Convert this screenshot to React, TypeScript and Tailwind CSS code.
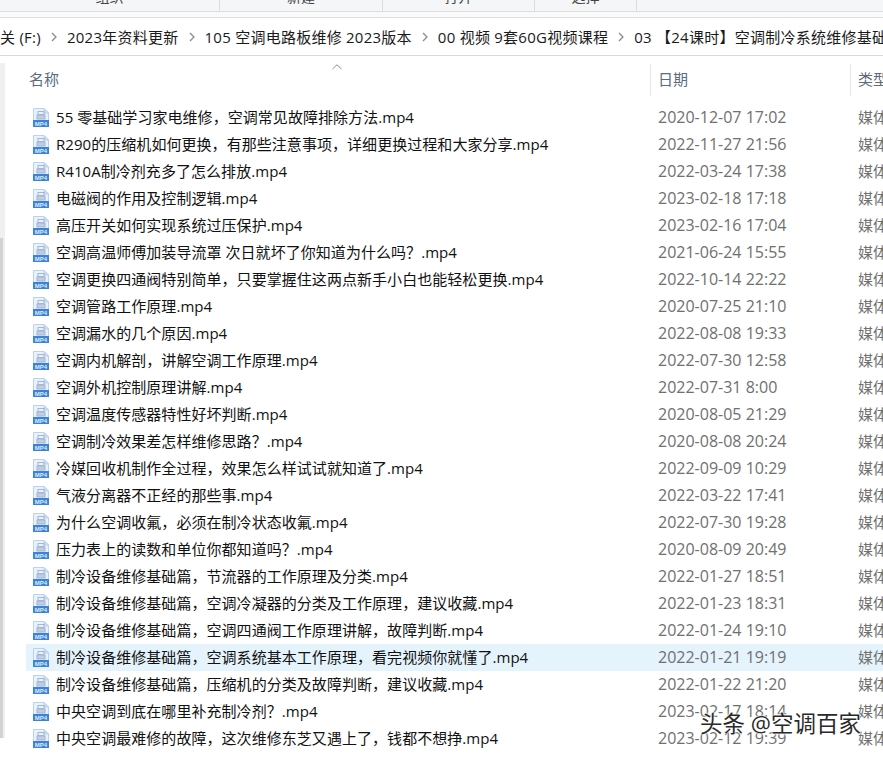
const files: [string, string][] = [
  ["55 零基础学习家电维修，空调常见故障排除方法.mp4", "2020-12-07 17:02"],
  ["R290的压缩机如何更换，有那些注意事项，详细更换过程和大家分享.mp4", "2022-11-27 21:56"],
  ["R410A制冷剂充多了怎么排放.mp4", "2022-03-24 17:38"],
  ["电磁阀的作用及控制逻辑.mp4", "2023-02-18 17:18"],
  ["高压开关如何实现系统过压保护.mp4", "2023-02-16 17:04"],
  ["空调高温师傅加装导流罩 次日就坏了你知道为什么吗？.mp4", "2021-06-24 15:55"],
  ["空调更换四通阀特别简单，只要掌握住这两点新手小白也能轻松更换.mp4", "2022-10-14 22:22"],
  ["空调管路工作原理.mp4", "2020-07-25 21:10"],
  ["空调漏水的几个原因.mp4", "2022-08-08 19:33"],
  ["空调内机解剖，讲解空调工作原理.mp4", "2022-07-30 12:58"],
  ["空调外机控制原理讲解.mp4", "2022-07-31 8:00"],
  ["空调温度传感器特性好坏判断.mp4", "2020-08-05 21:29"],
  ["空调制冷效果差怎样维修思路？.mp4", "2020-08-08 20:24"],
  ["冷媒回收机制作全过程，效果怎么样试试就知道了.mp4", "2022-09-09 10:29"],
  ["气液分离器不正经的那些事.mp4", "2022-03-22 17:41"],
  ["为什么空调收氟，必须在制冷状态收氟.mp4", "2022-07-30 19:28"],
  ["压力表上的读数和单位你都知道吗？.mp4", "2020-08-09 20:49"],
  ["制冷设备维修基础篇，节流器的工作原理及分类.mp4", "2022-01-27 18:51"],
  ["制冷设备维修基础篇，空调冷凝器的分类及工作原理，建议收藏.mp4", "2022-01-23 18:31"],
  ["制冷设备维修基础篇，空调四通阀工作原理讲解，故障判断.mp4", "2022-01-24 19:10"],
  ["制冷设备维修基础篇，空调系统基本工作原理，看完视频你就懂了.mp4", "2022-01-21 19:19"],
  ["制冷设备维修基础篇，压缩机的分类及故障判断，建议收藏.mp4", "2022-01-22 21:20"],
  ["中央空调到底在哪里补充制冷剂？.mp4", "2023-02-17 18:14"],
  ["中央空调最难修的故障，这次维修东芝又遇上了，钱都不想挣.mp4", "2023-02-12 19:39"],
];

function Mp4Icon() {
  return (
    <svg width="16" height="19" viewBox="0 0 16 19" className="shrink-0">
      <path d="M0.5 0.5H11L15.5 5V18.5H0.5Z" fill="#e9f1fb" stroke="#bcd2ec" />
      <path d="M11 0.5V5H15.5Z" fill="#c9dcf3" stroke="#bcd2ec" />
      <rect x="5" y="3.5" width="6" height="3" fill="none" stroke="#a4b6d2" />
      <rect x="4" y="7" width="8" height="4" fill="#c0cde2" stroke="#a4b6d2" />
      <rect x="0" y="12" width="16" height="7" fill="#3a83d6" />
      <text x="8" y="17.7" textAnchor="middle" fontSize="6" fontWeight="700" fill="#dcebfb" style={{ fontFamily: '"Liberation Sans", sans-serif' }}>
        MP4
      </text>
    </svg>
  );
}

function Chevron() {
  return (
    <svg width="6" height="10" viewBox="0 0 6 10" className="mx-[10px] shrink-0">
      <path d="M1 1l4 4-4 4" fill="none" stroke="#8a8a8a" strokeWidth="1.3" />
    </svg>
  );
}

function Row({ name, date, active }: { name: string; date: string; active: boolean }) {
  return (
    <div className={`flex h-[27px] items-center whitespace-nowrap ${active ? "bg-[#e5f3fc]" : ""}`}>
      <div className="flex w-[632px] shrink-0 items-center pl-[7px]">
        <Mp4Icon />
        <span className="ml-[7px] text-[15px] tracking-[0.05px] text-[#111]">{name}</span>
      </div>
      <span className="w-[200px] shrink-0 pb-[1px] text-[16px] text-[#707070]">{date}</span>
      <span className="text-[15px] text-[#707070]">媒体</span>
    </div>
  );
}

function RibbonCell({ label, width }: { label: string; width: string }) {
  return (
    <div className={`flex h-full shrink-0 justify-center overflow-hidden border-r border-[#dcdde0] ${width}`}>
      <span className="-mt-[13px] text-[14px] leading-[20px] text-[#444]">{label}</span>
    </div>
  );
}

export default function App() {
  return (
    <div className="relative h-[757px] w-[883px] overflow-hidden bg-white font-['Open_Sans','Noto_Sans_CJK_SC',sans-serif]">
      <div className="flex h-[12px] border-b border-[#dcdee1] bg-[#f5f6f7]">
        <RibbonCell label="组织" width="w-[220px]" />
        <RibbonCell label="新建" width="w-[163px]" />
        <RibbonCell label="打开" width="w-[152px]" />
        <RibbonCell label="选择" width="w-[102px]" />
      </div>
      <div className="h-[6px] border-b border-[#dfdfdf] bg-[#fafafa]" />
      <div className="flex h-[38px] items-center overflow-hidden whitespace-nowrap border-b border-[#d9d9d9] pt-[1px] text-[15px] tracking-[0.25px] text-[#1a1a1a]">
        <span className="shrink-0">关 (F:)</span>
        <Chevron />
        <span className="shrink-0">2023年资料更新</span>
        <Chevron />
        <span className="shrink-0">105 空调电路板维修 2023版本</span>
        <Chevron />
        <span className="shrink-0">00 视频 9套60G视频课程</span>
        <Chevron />
        <span className="shrink-0">03 【24课时】空调制冷系统维修基础</span>
      </div>
      <div className="flex h-[701px]">
        <div className="mt-[7px] flex h-[675px] w-[5px] shrink-0 flex-col bg-[#f0f0f0]">
          <div className="h-[175px]" />
          <div className="w-[3px] flex-1 bg-[#d2d2d2]" />
        </div>
        <div className="min-w-0 flex-1 overflow-hidden pl-[21px] pt-[8px]">
          <div className="flex h-[32px] items-center whitespace-nowrap text-[15px] text-[#5b6b7e]">
            <div className="relative flex h-full w-[624px] shrink-0 items-center pb-[2px] pl-[3px]">
              <span>名称</span>
              <svg width="10" height="6" viewBox="0 0 10 6" className="absolute left-[306px] top-0">
                <path d="M0.5 5L5 0.8L9.5 5" fill="none" stroke="#8a8a8a" />
              </svg>
            </div>
            <div className="flex h-full w-[200px] shrink-0 items-center border-l border-[#e5e5e5] pb-[2px] pl-[7px]">日期</div>
            <div className="flex h-full shrink-0 items-center border-l border-[#e5e5e5] pb-[2px] pl-[7px]">类型</div>
          </div>
          <div className="mt-[8px]">
            {files.map(([n, d]) => (
              <Row key={n} name={n} date={d} active={d === "2022-01-21 19:19"} />
            ))}
          </div>
        </div>
      </div>
      <div className="absolute left-[700px] top-[708px] whitespace-nowrap text-[22.5px] leading-[32px] text-[#2a2a2a] [text-shadow:0_0_2px_#fff,0_0_2px_#fff,0_0_3px_#fff]">
        头条 @空调百家
      </div>
    </div>
  );
}
